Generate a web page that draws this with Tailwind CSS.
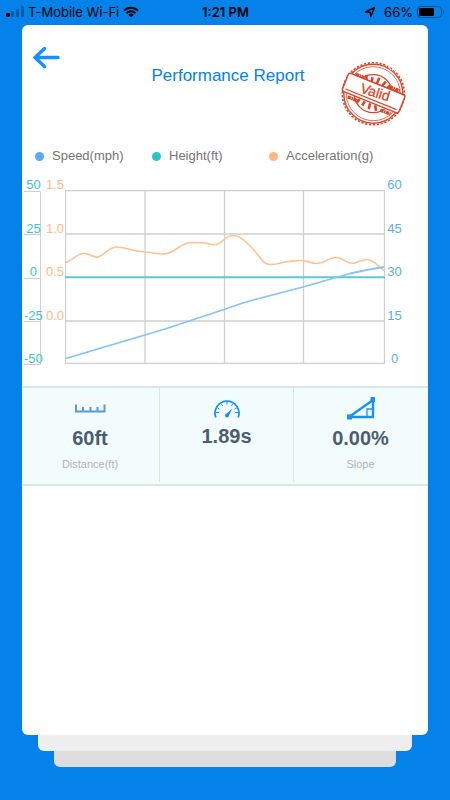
<!DOCTYPE html>
<html lang="en">
<head>
    <meta charset="UTF-8">
    <meta name="viewport" content="width=device-width, initial-scale=1.0">
    <title>Performance Report</title>
    <script src="https://cdn.jsdelivr.net/npm/@tailwindcss/browser@4"></script>
</head>
<body class="flex flex-col min-h-screen bg-[#0482ea] font-['Liberation_Sans',Arial,sans-serif]">

    <!-- Status bar -->
    <div class="grid grid-cols-[1fr_auto_1fr] items-center h-[25px] pb-[2px] pl-[6px] pr-[5px] text-[13px] leading-[22px] text-black font-['Inter',sans-serif]">
        <div class="flex items-center gap-1">
            <svg class="w-[18px] h-3" viewBox="0 0 18 12">
                <rect x="0" y="7" width="4" height="4" rx="1"/>
                <g fill-opacity=".28">
                    <rect x="5" y="5" width="3" height="6" rx="1"/>
                    <rect x="10" y="3" width="3" height="8" rx="1"/>
                    <rect x="15" y="0" width="3" height="11" rx="1"/>
                </g>
            </svg>
            <span>T-Mobile Wi-Fi</span>
            <svg class="w-4 h-3" viewBox="0 0 16 12">
                <path d="M1 4.6a10 10 0 0 1 14 0M3.5 7.2a6.4 6.4 0 0 1 9 0" fill="none" stroke="#000" stroke-width="2"/>
                <path d="M5.3 8.9a3.9 3.9 0 0 1 5.4 0L8 11.6z"/>
            </svg>
        </div>
        <span class="font-semibold">1:21 PM</span>
        <div class="flex items-center justify-end gap-1">
            <svg class="w-3 h-3 mr-1" viewBox="0 0 12 12">
                <path d="M1.5 6 10.5 1.5 6.8 10.6 6.2 6.2z" fill="none" stroke="#000" stroke-width="1.4" stroke-linejoin="round"/>
            </svg>
            <span>66%</span>
            <svg class="w-[28px] h-3" viewBox="0 0 28 12">
                <rect x=".5" y=".5" width="24" height="11" rx="3" fill="none" stroke="#000" stroke-opacity=".4"/>
                <rect x="2" y="2" width="15" height="8" rx="1"/>
                <path d="M26 4q2 2 0 4z" fill-opacity=".45"/>
            </svg>
        </div>
    </div>

    <!-- Report card -->
    <main class="flex-1 mx-[22px] bg-white rounded-[6px]">
        <header class="grid grid-cols-[1fr_auto_1fr] items-start pt-5 pl-[11px] pr-[5px]">
            <button type="button" aria-label="Back" class="w-7 h-6">
                <svg class="w-7 h-6" viewBox="0 0 28 24" fill="none" stroke="#1a8ffb" stroke-width="3.5" stroke-linecap="round" stroke-linejoin="round">
                    <path d="M25 12.500H2M11.500 3.500 2 12.500l9.500 9"/>
                </svg>
            </button>
            <h1 class="mt-5 text-[17px] leading-[22px] text-[#0482ea]">Performance Report</h1>
            <svg class="justify-self-end w-[70px] h-[70px] mt-[14px] mr-[15px]" viewBox="0 0 70 70" fill="none" stroke="#d6472b">
                <circle cx="35.300" cy="34.700" r="31" stroke-width="1.600" stroke-dasharray="2.200 1.700"/>
                <circle cx="35.300" cy="34.700" r="29.500" stroke-width="1.400"/>
                <circle cx="35.300" cy="34.700" r="27" stroke-width=".8"/>
                <circle cx="35.300" cy="34.700" r="19" stroke-width="1.300"/>
                <g transform="rotate(22 36 34.500)">
                    <path d="M12 23.500h9M48 22.500h11M13 47.500h11M48 47.500h11" stroke-width="3.400" stroke-dasharray="3.500 .5 1.500 .5"/>
                    <path d="M24 25l-2-5M29.500 25l-1-5M35 25v-7M40.500 25l2-6M46 25l2-4M25 45l-2 5M30.500 45l-1 5M36 45l1 6M41.500 45l3 5" stroke-width="2.600"/>
                    <rect x="5" y="24.500" width="61" height="19.500" rx="2.500" fill="#fff" stroke-width="1.500"/>
                    <path d="M8 41h55" stroke-width="1.200"/>
                </g>
                <text x="37" y="38" transform="rotate(18 37 34)" text-anchor="middle" font-size="14" fill="#d6472b" stroke-width=".3">Valid</text>
                <path d="M49 5l4 6M55 9l3 5" stroke="#fff" stroke-width="1"/>
            </svg>
        </header>

        <!-- Legend -->
        <ul class="grid grid-cols-3 mt-[17px] pl-[13px] pr-[42px] text-[13px] leading-5 text-[#757575]">
            <li class="flex items-center gap-2"><span class="w-[9px] h-[9px] rounded-full bg-[#58abee]"></span>Speed(mph)</li>
            <li class="flex items-center gap-2"><span class="w-[9px] h-[9px] rounded-full bg-[#2ac4c7]"></span>Height(ft)</li>
            <li class="flex items-center gap-2"><span class="w-[9px] h-[9px] rounded-full bg-[#ffb77f]"></span>Acceleration(g)</li>
        </ul>

        <!-- Chart -->
        <div class="flex mt-3 pl-[2px] pr-[26px] text-[13px] leading-[14px]">
            <div class="grid w-[18px]">
                <svg class="col-start-1 row-start-1 self-end w-[18px] h-[176px]" viewBox="0 0 18 176" fill="none" stroke="#cfcfcf">
                    <path d="M0 1.500h16.500v173H0M0 44.500h16M0 88.500h16M0 131.500h16"/>
                </svg>
                <div class="col-start-1 row-start-1 flex flex-col justify-between items-center h-[188px] pr-[2px] text-[#3cc6c9]">
                    <span>50</span><span>25</span><span>0</span><span>-25</span><span>-50</span>
                </div>
            </div>
            <div class="flex flex-col justify-between items-end w-[23px] h-[188px] pr-px pb-[43px] text-[#ffba84]">
                <span>1.5</span><span>1.0</span><span>0.5</span><span>0.0</span>
            </div>
            <svg class="flex-1 min-w-0 h-[174px] mt-3" viewBox="0 0 320 174" preserveAspectRatio="none" fill="none">
                <path d="M.5 173.500V.5h319v173zM80 0v174M159.500 0v174M238.500 0v174M0 44h320M0 131h320" stroke="#cfcfcf" stroke-width="1.300"/>
                <path d="M1 72.500C8 70 12 63.500 19 63.500S27 68 33 67C40 65 44 57 52 57S65 61 80 62C86 62 92 64.500 99 64C112 63 114 53 126 52.500C132 52.500 136 53 140 53C145 54 148 55 151 54.500C158 53 161 45 168 45.500C178 46 182 54 188 59C195 66 197 74 205 74.500C211 75 215 72.500 220 72C227 71.500 231 70 237 70.500C243 71 247 74 253 73.500C260 73 264 67.500 271 67.500S281 73.500 287 73.500S297 69 302 69.500C310 70 313 77 319 80.500" stroke="#ffc293" stroke-width="1.600"/>
                <path d="M0 87.300h320" stroke="#5ccacc" stroke-width="2"/>
                <path d="M1 168.500 36 158 80 145 100 139 159 119.500C170 115.500 180 112 190 109.500L238 97 285 83.500Q305 79 319 77" stroke="#86c3f3" stroke-width="1.800"/>
            </svg>
            <div class="flex flex-col justify-between items-center w-[17px] h-[188px] pl-[2px] text-[#5aaeee]">
                <span>60</span><span>45</span><span>30</span><span>15</span><span>0</span>
            </div>
        </div>

        <!-- Results -->
        <div class="grid grid-cols-[138fr_134fr_134fr] h-[100px] mt-5 pb-[2px] border-y-2 border-[#d9e5e8] bg-[#f3fcfd] text-center text-[#4b5d70]">
            <section class="flex flex-col items-center pt-2 pr-px border-r border-[#d9e5e8]">
                <svg class="w-8 h-6" viewBox="0 0 32 24" fill="none" stroke="#569ada" stroke-width="2">
                    <path d="M2 8.500v7h28.500v-7M9 15v-4M16.500 15v-4M23.500 15v-4"/>
                </svg>
                <p class="mt-[6px] text-xl leading-6 font-bold">60ft</p>
                <p class="mt-[6px] text-[11px] leading-4 text-[#b0b4b6]">Distance(ft)</p>
            </section>
            <section class="flex flex-col items-center pt-2 border-r border-[#d9e5e8]">
                <svg class="w-7 h-6" viewBox="0 0 28 24" fill="none" stroke="#1a8ffb">
                    <path d="M2.800 21.500A12 12 0 1 1 25.200 21.500" stroke-width="1.800"/>
                    <path d="M14 6v2.500M8.500 8l1 2M19.500 8l-1 2M4.500 12l2 1M3 16.500h3M22 16.500h3M23.500 12l-2 1" stroke-width="1"/>
                    <path d="M12.500 18.500 19.500 12.500 15.500 20z" fill="#1a8ffb" stroke="none"/>
                    <circle cx="14" cy="19.500" r="1.900" fill="#1a8ffb" stroke="none"/>
                </svg>
                <p class="mt-1 text-xl leading-6 font-bold">1.89s</p>
            </section>
            <section class="flex flex-col items-center pt-2 pr-px">
                <svg class="w-7 h-6" viewBox="0 0 28 24" fill="none" stroke="#1a8ffb">
                    <path d="M2 21 26 4v17z" stroke-width="2.400"/>
                    <path d="M20 21v-8h6" stroke-width="1.300"/>
                    <path d="M0 18.500h5v5H0zM23.500 1h4.500v5h-4.500z" fill="#1a8ffb" stroke="none"/>
                </svg>
                <p class="mt-[6px] text-xl leading-6 font-bold">0.00%</p>
                <p class="mt-[6px] text-[11px] leading-4 text-[#b0b4b6]">Slope</p>
            </section>
        </div>
    </main>

    <!-- Stacked pages under the card -->
    <div class="h-4 mx-[38px] bg-[#eeeeee] rounded-b-[6px]"></div>
    <div class="h-4 mx-[54px] mb-[33px] bg-[#dddddd] rounded-b-[6px]"></div>

</body>
</html>
